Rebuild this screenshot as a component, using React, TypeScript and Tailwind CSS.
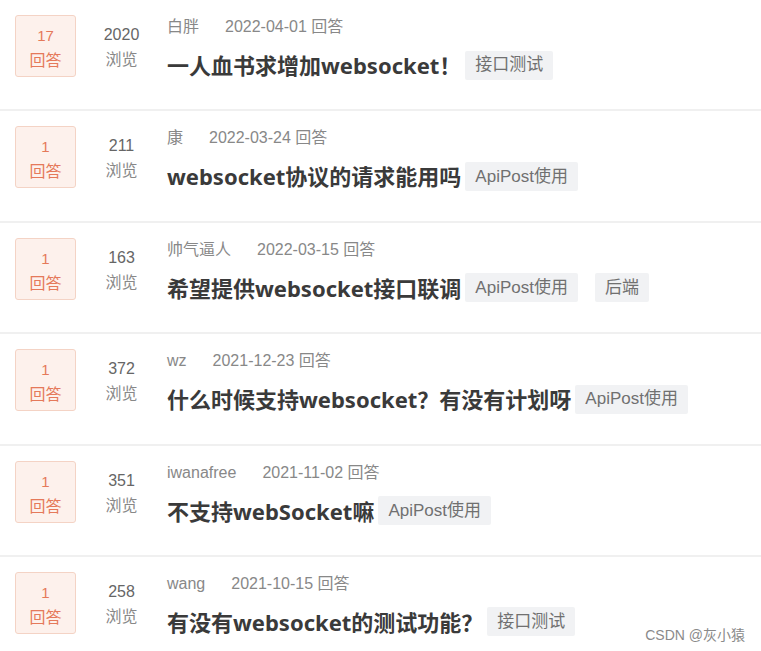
import React from "react";

type Question = {
  answers: number;
  views: number;
  author: string;
  date: string;
  title: string;
  tags: string[];
};

const questions: Question[] = [
  { answers: 17, views: 2020, author: "白胖", date: "2022-04-01", title: "一人血书求增加websocket！", tags: ["接口测试"] },
  { answers: 1, views: 211, author: "康", date: "2022-03-24", title: "websocket协议的请求能用吗", tags: ["ApiPost使用"] },
  { answers: 1, views: 163, author: "帅气逼人", date: "2022-03-15", title: "希望提供websocket接口联调", tags: ["ApiPost使用", "后端"] },
  { answers: 1, views: 372, author: "wz", date: "2021-12-23", title: "什么时候支持websocket？有没有计划呀", tags: ["ApiPost使用"] },
  { answers: 1, views: 351, author: "iwanafree", date: "2021-11-02", title: "不支持webSocket嘛", tags: ["ApiPost使用"] },
  { answers: 1, views: 258, author: "wang", date: "2021-10-15", title: "有没有websocket的测试功能？", tags: ["接口测试"] },
];

const font = { fontFamily: '"Liberation Sans", "Noto Sans CJK SC", sans-serif' };
const titleFont = { fontFamily: '"Noto Sans", "Noto Sans CJK SC", sans-serif' };

function Row({ q, last }: { q: Question; last: boolean }) {
  return (
    <div className={`flex h-[111.4px] pt-[15px] ${last ? "" : "border-b-2 border-[#f0f0f0]"}`}>
      {/* 回答数 */}
      <div className="ml-[15px] flex h-[62px] w-[61px] shrink-0 flex-col items-center rounded-[3px] border border-[#f4d3c5] bg-[#fdf1ec] pt-[10px] text-[#e5795a]">
        <span className="text-[15px] leading-[20px]">{q.answers}</span>
        <span className="mt-[5px] text-[16px] leading-[20px]">回答</span>
      </div>
      {/* 浏览数 */}
      <div className="flex w-[91px] shrink-0 flex-col items-center pt-[10px]">
        <span className="text-[16px] leading-[20px] text-[#666]">{q.views}</span>
        <span className="mt-[5px] text-[16px] leading-[20px] text-[#888]">浏览</span>
      </div>
      {/* 内容 */}
      <div className="flex flex-col">
        <div className="mt-[2px] flex gap-[26px] text-[16px] leading-[20px] text-[#888]">
          <span>{q.author}</span>
          <span>{q.date} 回答</span>
        </div>
        <div className="mt-[13px] flex items-center">
          <span className="text-[22px] font-bold leading-[30px] text-[#3a3a3a]" style={titleFont}>
            {q.title}
          </span>
          <div className="ml-[4px] flex gap-[17px]">
            {q.tags.map((t) => (
              <span key={t} className="flex h-[29px] items-center rounded-[2px] bg-[#f1f2f4] px-[10px] text-[17px] text-[#707070]">
                {t}
              </span>
            ))}
          </div>
        </div>
      </div>
    </div>
  );
}

export default function App() {
  return (
    <div className="relative h-[651px] w-[761px] overflow-hidden bg-white" style={font}>
      {questions.map((q, i) => (
        <Row key={i} q={q} last={i === questions.length - 1} />
      ))}
      <span className="absolute right-[16px] top-[625px] text-[14px] leading-[20px] text-[#8a8a8a]">
        CSDN @灰小猿
      </span>
    </div>
  );
}
